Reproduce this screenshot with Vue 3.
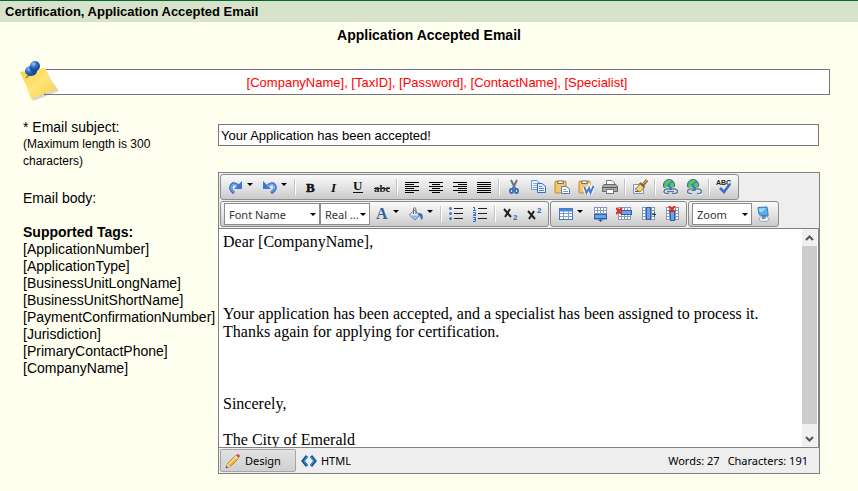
<template>
  <div class="page">
    <header class="title-bar">Certification, Application Accepted Email</header>
    <h1 class="heading">Application Accepted Email</h1>

    <div class="note">
      <svg class="note-icon" width="42" height="44" viewBox="0 0 42 44">
        <defs>
          <linearGradient id="paper" x1="0" y1="0" x2="1" y2="1">
            <stop offset="0" stop-color="#fbd23c" />
            <stop offset="0.5" stop-color="#ffe57a" />
            <stop offset="1" stop-color="#f8cf4a" />
          </linearGradient>
          <radialGradient id="pin" cx="0.35" cy="0.3" r="0.8">
            <stop offset="0" stop-color="#9ccbf5" />
            <stop offset="0.4" stop-color="#2f6fc4" />
            <stop offset="1" stop-color="#0b3484" />
          </radialGradient>
        </defs>
        <path d="M2 13 26 9Q31 20 39 30L13 40Q9 27 2 13Z" fill="#777" opacity=".3" />
        <path d="M0 11 25 7Q30 19 37 28Q25 32 11 38Q7 25 0 11Z" fill="url(#paper)" />
        <path d="M6 17 10 13" stroke="#777" stroke-width="1.5" />
        <ellipse cx="11" cy="10" rx="6" ry="5" fill="url(#pin)" />
        <path d="M9 7 13 4 18 9 13 13Z" fill="#174c9f" />
        <circle cx="15" cy="5" r="5" fill="url(#pin)" />
      </svg>
      <div class="note-box">[CompanyName], [TaxID], [Password], [ContactName], [Specialist]</div>
    </div>

    <form class="form" @submit.prevent>
      <label class="label" for="subject">
        * Email subject:
        <small>(Maximum length is 300 characters)</small>
      </label>
      <div class="field">
        <input id="subject" v-model="subject" class="subject" type="text" maxlength="300" />
      </div>

      <div class="side">
        <span id="body-label">Email body:</span>
        <strong class="tags-title">Supported Tags:</strong>
        <ul class="tags">
          <li v-for="tag in tags" :key="tag">[{{ tag }}]</li>
        </ul>
      </div>

      <div class="editor">
        <div class="toolbars">
          <div v-for="(row, r) in toolbars" :key="r" class="toolbar-row">
            <div v-for="(group, g) in row" :key="g" class="group">
              <template v-for="(item, i) in group" :key="i">
                <span v-if="item === '|'" class="separator"></span>
                <select v-else-if="item.select" class="select" :class="item.size" :aria-label="item.label">
                  <option>{{ item.select }}</option>
                </select>
                <button
                  v-else
                  type="button"
                  class="tool"
                  :class="{ drop: item.drop }"
                  :title="item.label"
                  :aria-label="item.label"
                >
                  <svg width="16" height="16" viewBox="0 0 16 16" fill="none" v-html="icons[item.icon]"></svg>
                </button>
              </template>
            </div>
          </div>
        </div>

        <div class="content">
          <div class="text" contenteditable="true" role="textbox" aria-labelledby="body-label" spellcheck="false">
            <p>Dear [CompanyName],</p>
            <p><br /></p>
            <p>
              Your application has been accepted, and a specialist has been assigned to process it.<br />
              Thanks again for applying for certification.
            </p>
            <p><br /></p>
            <p>Sincerely,</p>
            <p>The City of Emerald</p>
          </div>
          <div class="scrollbar">
            <button type="button" class="scroll-button" aria-label="Scroll up">
              <svg width="9" height="6" viewBox="0 0 9 6"><path d="M1 5 4.5 1.5 8 5" fill="none" stroke="#555" stroke-width="2" /></svg>
            </button>
            <div class="thumb"></div>
            <button type="button" class="scroll-button" aria-label="Scroll down">
              <svg width="9" height="6" viewBox="0 0 9 6"><path d="M1 1 4.5 4.5 8 1" fill="none" stroke="#555" stroke-width="2" /></svg>
            </button>
          </div>
        </div>

        <div class="footer">
          <button type="button" class="mode" :class="{ active: mode === 'design' }" @click="mode = 'design'">
            <svg width="16" height="16" viewBox="0 0 16 16" fill="none" v-html="icons.pencil"></svg>
            Design
          </button>
          <button type="button" class="mode" :class="{ active: mode === 'html' }" @click="mode = 'html'">
            <svg width="16" height="16" viewBox="0 0 16 16" fill="none" v-html="icons.code"></svg>
            HTML
          </button>
          <div class="counts">
            <span>Words: 27</span>
            <span>Characters: 191</span>
          </div>
        </div>
      </div>
    </form>
  </div>
</template>

<script setup>
import { ref } from 'vue'

const subject = ref('Your Application has been accepted!')
const mode = ref('design')

const tags = [
  'ApplicationNumber',
  'ApplicationType',
  'BusinessUnitLongName',
  'BusinessUnitShortName',
  'PaymentConfirmationNumber',
  'Jurisdiction',
  'PrimaryContactPhone',
  'CompanyName'
]

const tool = (icon, label, drop = false) => ({ icon, label, drop })

const toolbars = [
  [
    [
      tool('redo', 'Redo', true),
      tool('undo', 'Undo', true),
      '|',
      tool('bold', 'Bold'),
      tool('italic', 'Italic'),
      tool('underline', 'Underline'),
      tool('strike', 'Strikethrough'),
      '|',
      tool('left', 'Align left'),
      tool('center', 'Align center'),
      tool('right', 'Align right'),
      tool('justify', 'Justify'),
      '|',
      tool('cut', 'Cut'),
      tool('copy', 'Copy'),
      tool('paste', 'Paste'),
      tool('pasteWord', 'Paste from Word'),
      tool('print', 'Print'),
      '|',
      tool('brush', 'Format stripper'),
      '|',
      tool('link', 'Insert link'),
      tool('unlink', 'Remove link'),
      '|',
      tool('spell', 'Spell check')
    ]
  ],
  [
    [
      { select: 'Font Name', label: 'Font name', size: 'wide' },
      { select: 'Real ...', label: 'Font size', size: 'narrow' },
      tool('color', 'Text color', true),
      tool('bucket', 'Background color', true),
      '|',
      tool('bullets', 'Bulleted list'),
      tool('numbers', 'Numbered list'),
      '|',
      tool('sub', 'Subscript'),
      tool('sup', 'Superscript')
    ],
    [
      tool('table', 'Insert table', true),
      tool('rowBelow', 'Insert row below'),
      tool('rowDelete', 'Delete row'),
      tool('columnRight', 'Insert column right'),
      tool('columnDelete', 'Delete column')
    ],
    [{ select: 'Zoom', label: 'Zoom', size: 'medium' }, tool('screen', 'Toggle full screen')]
  ]
]

const clipboard =
  '<rect x="1" y="2" width="11" height="12" rx="1" fill="#f5c766" stroke="#b98a35"/><path d="M3.5 4.5V2.5H5Q6.5-.5 8 2.5H9.5V4.5Z" fill="#e8e8e8" stroke="#777"/>'

const grid =
  '<rect x="2" y="2" width="12" height="11" fill="#fff"/><path d="M2.5 1.5V13.5M5.5 1.5V13.5M8.5 1.5V13.5M11.5 1.5V13.5M14.5 1.5V13.5M2 1.5H15M2 4.5H15M2 7.5H15M2 10.5H15M2 13.5H15" stroke="#8699b8"/>'

const globe =
  '<circle cx="7" cy="6" r="5.5" fill="#3d84cf" stroke="#36648b"/><path d="M3 3Q6 0 9 1L8 4 5 5 6 8 4 10 2 7ZM10 3 12 5 12 8 9 8 8 6Z" fill="#5cc947"/>'

const icons = {
  redo: '<path d="M6 14Q1 10 3.5 6Q6 3 10 6.5" stroke="#3f76d0" stroke-width="3"/><path d="M5.5 13Q1.500 10 3.5 6.5Q6 3.5 10 7" stroke="#8ab8f5"/><path d="M14 2V10H6Z" fill="#3f76d0"/>',
  undo: '<path d="M9 14Q15 10 12.5 6Q10 3 6 6.500" stroke="#3f76d0" stroke-width="3"/><path d="M9.5 13Q14 10 12.5 6.5Q10 3.5 6 7" stroke="#8ab8f5"/><path d="M1 2V10H9Z" fill="#3f76d0"/>',
  bold: '<text x="4" y="13" font-family="Liberation Serif, serif" font-size="13" font-weight="bold" fill="#111" stroke="#111" stroke-width=".5">B</text>',
  italic: '<text x="5" y="13" font-family="Liberation Serif, serif" font-size="13" font-style="italic" font-weight="bold" fill="#111">I</text>',
  underline: '<text x="3" y="11" font-family="Liberation Serif, serif" font-size="13" font-weight="bold" fill="#111">U</text><path d="M3 13.5H13" stroke="#111"/>',
  strike: '<text x="0" y="13" font-family="Liberation Serif, serif" font-size="11" font-weight="bold" fill="#222">abc</text><path d="M0 9.5H16" stroke="#222"/>',
  left: '<path d="M1 3.5H15M1 5.5H10M1 7.5H15M1 9.5H10M1 11.5H15M1 13.5H10" stroke="#000"/>',
  center: '<path d="M1 3.5H15M4 5.5H12M1 7.5H15M4 9.5H12M1 11.5H15M4 13.5H12" stroke="#000"/>',
  right: '<path d="M1 3.5H15M6 5.5H15M1 7.5H15M6 9.5H15M1 11.5H15M6 13.5H15" stroke="#000"/>',
  justify: '<path d="M1 3.5H15M1 5.5H15M1 7.5H15M1 9.5H15M1 11.5H15M1 13.5H15" stroke="#000"/>',
  cut: '<path d="M5 1 9.5 10M11 1 6.5 10" stroke="#65758a" stroke-width="2"/><ellipse cx="5.5" cy="12" rx="1.6" ry="2.2" stroke="#2f65bd" stroke-width="1.7"/><ellipse cx="10.5" cy="12" rx="1.6" ry="2.2" stroke="#2f65bd" stroke-width="1.7"/>',
  copy: '<path d="M1.5 1.5H7L9.5 4V10.5H1.5Z" fill="#eaf3ff" stroke="#6b96d6"/><path d="M3 4.5H7M3 6.5H7M3 8.5H7" stroke="#8caee0"/><path d="M7.5 4.5H12L15.5 7.5V13.5H7.5Z" fill="#e3efff" stroke="#376cbd"/><path d="M9 7.5H12M9 9.5H14M9 11.5H14" stroke="#5b8bd3"/>',
  paste: clipboard + '<path d="M7.5 7.5H12L15.5 10V14.5H7.5Z" fill="#fff" stroke="#567bb0"/><path d="M9 10.5H12M9 12.5H14" stroke="#779bd0"/>',
  pasteWord: clipboard + '<path d="M6.5 8 8.5 14 11 9 12.5 14 15.5 7" stroke="#fff" stroke-width="4"/><path d="M6.5 8 8.5 14 11 9 12.5 14 15.5 7" stroke="#4b7ecb" stroke-width="2"/>',
  print: '<path d="M4.5 6V1.5H10L12.5 4V6" fill="#fff" stroke="#777"/><path d="M.5 7.5 2 5.5H14L15.5 7.5V12.5H.5Z" fill="#aaa" stroke="#666"/><path d="M1 8.5H15" stroke="#555"/><rect x="4.5" y="10.5" width="7" height="4" fill="#fff" stroke="#777"/>',
  brush: '<path d="M1.5 5.5H11.5V14.5H1.5Z" fill="#edf3fc" stroke="#8297b3"/><path d="M3 12.5H8" stroke="#315f9d"/><path d="M15 1 11 6" stroke="#a66b25" stroke-width="3"/><path d="M15 1 11 5" stroke="#ebb45b"/><path d="M8 4 12.5 8 8 13 3 10Q7 8 8 4Z" fill="#f8d46d" stroke="#9f7a2f"/><path d="M8 4 12.5 8" stroke="#5a6575" stroke-width="2"/>',
  link: globe + '<path d="M7 10H4.5Q2 10.5 2 12.5Q2 14.5 5 14.5H7M10 10H13Q15.5 10.5 15.5 12.5Q15.5 14.5 12 14.5H10M5 12.5H12" stroke="#f0f4fa" stroke-width="3"/><path d="M7 10H4.5Q2 10.5 2 12.5Q2 14.5 5 14.5H7M10 10H13Q15.5 10.5 15.5 12.5Q15.5 14.5 12 14.5H10M5 12.5H12" stroke="#62799d" stroke-width="1.5"/>',
  unlink: globe + '<path d="M6.5 10H4Q1.5 10.5 1.5 12.5Q1.5 14.5 4 14.5H6M10.5 10H13Q15.5 10.5 15.5 12.5Q15.5 14.5 13 14.5H11" stroke="#f0f4fa" stroke-width="3"/><path d="M6.5 10H4Q1.5 10.5 1.5 12.5Q1.5 14.5 4 14.5H6M10.5 10H13Q15.5 10.5 15.5 12.5Q15.5 14.5 13 14.5H11" stroke="#62799d" stroke-width="1.5"/>',
  spell: '<text x="0" y="6" font-family="Liberation Sans, sans-serif" font-size="7" font-weight="bold" fill="#222">ABC</text><path d="M4 9 8 13 14 5" stroke="#3d6fc7" stroke-width="2.5"/>',
  color: '<text x="2" y="13" font-family="Liberation Serif, serif" font-size="16" font-weight="bold" fill="#335f9c">A</text>',
  bucket: '<path d="M6 4 12 9 7 14 1.5 9Z" fill="#e5eefb" stroke="#697f9b"/><path d="M2.5 9.5H11L7 13Z" fill="#8db4e7"/><path d="M5.5 8V3Q7-.5 8 4V8" stroke="#667"/><path d="M10 7Q16 6 14.5 13Q13 15 12.5 11L10 9Z" fill="#386fbb"/>',
  bullets: '<path d="M6 2.5H15M6 7.5H15M6 12.5H15" stroke="#222"/><circle cx="2.5" cy="2.5" r="1.5" fill="#4675c6"/><circle cx="2.5" cy="7.5" r="1.5" fill="#4675c6"/><circle cx="2.5" cy="12.5" r="1.5" fill="#4675c6"/>',
  numbers: '<path d="M6 2.5H15M6 7.5H15M6 12.5H15" stroke="#222"/><g stroke="#376ac2"><path d="M1 1.500H2.500V5M1 4.500H4"/><path d="M1 6.500H3.500V8.500H1.500V9.500H4"/><path d="M1 11.500H3.500V15M1.500 13.500H3.500M1 15.500H3.500"/></g>',
  sub: '<path d="M2 3 9 11M8 3 3 11" stroke="#222" stroke-width="2"/><text x="11" y="14" font-family="Liberation Sans, sans-serif" font-size="8" font-weight="bold" fill="#2f65bd">2</text>',
  sup: '<path d="M2 5 9 13M8 5 3 13" stroke="#222" stroke-width="2"/><text x="11" y="7" font-family="Liberation Sans, sans-serif" font-size="8" font-weight="bold" fill="#2f65bd">2</text>',
  table: '<rect x="1.5" y="2.5" width="13" height="11" fill="#fff" stroke="#4778be"/><path d="M2 4H14" stroke="#4b86d9" stroke-width="3"/><path d="M5.5 5V13M10.5 5V13M2 7.5H14M2 10.5H14" stroke="#7c9fd0"/>',
  rowBelow: grid + '<rect x="2.5" y="8.5" width="12" height="4" fill="#6aa3ef" stroke="#315eaa"/><path d="M8.5 13V16M6.5 14.5H10.5" stroke="#315eaa"/>',
  rowDelete: grid + '<rect x="5.5" y="4.5" width="10" height="4" fill="#6aa3ef" stroke="#315eaa"/><path d="M0 2 6 8M6 2 0 8" stroke="#e52b19" stroke-width="2"/>',
  columnRight: grid + '<rect x="6.5" y="1.5" width="4" height="12" fill="#6aa3ef" stroke="#315eaa"/><path d="M12 8.5H16M14.5 6.5V10.5" stroke="#29446e"/>',
  columnDelete: grid + '<rect x="6.5" y="5.5" width="4" height="9" fill="#6aa3ef" stroke="#315eaa"/><path d="M5 0 11 6M11 0 5 6" stroke="#e52b19" stroke-width="2"/>',
  screen: '<ellipse cx="8" cy="13" rx="5" ry="2.5" fill="#e7edf5" stroke="#9aaabd"/><path d="M6 10H10L9 13H6Z" fill="#7288a6"/><path d="M2 1.5 11 1Q12 5 12 10L3.5 9Q2 5 2 1.5Z" fill="#56b2ee" stroke="#3278b8"/><path d="M3 2.5 10 2 6 6H3.5Z" fill="#a5dafa"/>',
  pencil: '<path d="M1 15 2.5 10.5 11 2 14 5 5.5 13.5Z" fill="#f5ad32" stroke="#a2742c" stroke-width=".7"/><path d="M4 11 11.5 3.5" stroke="#ffe08a" stroke-width="1.5"/><path d="M1 15 2.5 10.5 5.5 13.5Z" fill="#ecd4ae"/><path d="M1 15 1.6 13 3 14.4Z" fill="#222"/><path d="M10 3 13 6" stroke="#d8dce4" stroke-width="1.5"/><path d="M11.5 2 13 .8 15.2 3 14 4.5Z" fill="#d94a3e"/>',
  code: '<path d="M6 3 2 8 6 13M10 3 14 8 10 13" stroke="#155b8c" stroke-width="3"/><path d="M6 4 3 8 6 12M10 4 13 8 10 12" stroke="#44a1dd"/>'
}
</script>

<style>
body {
  margin: 0;
  background: #fffff0;
}
</style>

<style scoped>
.page {
  font-family: 'Liberation Sans', Arial, sans-serif;
  font-size: 14px;
  line-height: 17px;
  color: #000;
}

.page * {
  box-sizing: border-box;
}

.title-bar {
  padding: 2px 5px;
  border-top: 1px solid #006633;
  background: #d6e3ca;
  font-size: 13px;
  font-weight: bold;
}

.heading {
  margin: 5px 0 0;
  font-size: 14px;
  line-height: 17px;
  text-align: center;
}

/* 便签提示 */
.note {
  position: relative;
  margin: 25px 28px 0 44px;
}

.note-icon {
  position: absolute;
  left: -24px;
  top: -8px;
}

.note-box {
  padding: 5px 4px 3px;
  border: 1px solid #767676;
  background: #fff;
  color: #f00;
  font-size: 13px;
  line-height: 16px;
  text-align: center;
}

.form {
  display: grid;
  grid-template-columns: 195px 1fr;
  row-gap: 2px;
  padding: 24px 38px 0 23px;
}

.label {
  padding-right: 40px;
}

.label small {
  display: block;
  font-size: 12px;
}

.field {
  padding: 5px 1px 0 0;
}

.subject {
  display: block;
  width: 100%;
  height: 22px;
  padding: 0 2px;
  border: 1px solid #767676;
  background: #fff;
  font-family: inherit;
  font-size: 13px;
}

.side {
  padding-top: 18px;
}

.tags-title {
  display: block;
  margin-top: 17px;
}

.tags {
  margin: 0;
  padding: 0;
  list-style: none;
}

/* 编辑器 */
.editor {
  border: 1px solid #828282;
  background: #eee;
  font-family: 'Noto Sans', 'Open Sans', sans-serif;
  font-size: 11px;
}

.toolbars {
  display: grid;
  gap: 1px;
  padding: 1px;
}

.toolbar-row {
  display: flex;
  gap: 1px;
}

.group {
  display: flex;
  align-items: center;
  height: 26px;
  padding: 0 2px 0 3px;
  border: 1px solid #8c8c8c;
  border-radius: 3px;
  background: linear-gradient(#fafafa, #e4e4e4 50%, #cacaca);
}

.tool {
  display: flex;
  align-items: center;
  width: 24px;
  height: 22px;
  padding: 0 4px;
  border: 0;
  background: none;
}

.tool svg {
  flex: none;
}

.tool.drop {
  gap: 3px;
  width: 34px;
}

.tool.drop::after {
  content: '';
  flex: none;
  margin-bottom: 5px;
  border: 3px solid transparent;
  border-top-color: #000;
  border-bottom: 0;
}

.separator {
  width: 2px;
  height: 16px;
  margin: 0 2px;
  border-left: 1px solid #c4c4c4;
  border-right: 1px solid #fff;
}

.select {
  height: 22px;
  padding: 0 4px;
  border: 1px solid #8c8c8c;
  border-radius: 0;
  appearance: none;
  background: #fff url("data:image/svg+xml,%3Csvg xmlns='http://www.w3.org/2000/svg' width='6' height='3'%3E%3Cpath d='M0 0h6L3 3z'/%3E%3C/svg%3E") no-repeat right 3px center;
  color: #333;
  font-family: inherit;
  font-size: 11px;
}

.select.wide {
  width: 96px;
}

.select.narrow {
  width: 50px;
}

.select.medium {
  width: 60px;
}

.content {
  display: flex;
  height: 220px;
  border-top: 1px solid #828282;
  border-right: 1px solid #828282;
  border-bottom: 1px solid #828282;
  background: #fff;
}

.text {
  flex: 1;
  overflow: hidden;
  padding: 4px 4px 0;
  font-family: 'Liberation Serif', 'Times New Roman', serif;
  font-size: 16px;
  line-height: 18px;
  outline: none;
}

.text p {
  margin: 0 0 18px;
}

.scrollbar {
  display: flex;
  flex-direction: column;
  width: 15px;
  margin-right: 1px;
  background: #f0f0f0;
}

.scroll-button {
  display: flex;
  align-items: center;
  justify-content: center;
  height: 17px;
  padding: 0;
  border: 0;
  background: #f0f0f0;
}

.thumb {
  flex: 1;
  margin-bottom: 6px;
  background: #cdcdcd;
}

.footer {
  display: flex;
  align-items: center;
  padding: 1px 11px 1px 1px;
}

.mode {
  display: flex;
  align-items: center;
  gap: 4px;
  height: 23px;
  padding: 0 4px;
  border: 1px solid transparent;
  border-radius: 2px;
  background: none;
  color: #000;
  font-family: inherit;
  font-size: 11px;
}

.mode.active {
  padding: 0 14px 0 4px;
  border-color: #a6a6a6;
  background: linear-gradient(#e2e2e2, #d0d0d0);
}

.counts {
  display: flex;
  gap: 8px;
  margin-left: auto;
}
</style>
